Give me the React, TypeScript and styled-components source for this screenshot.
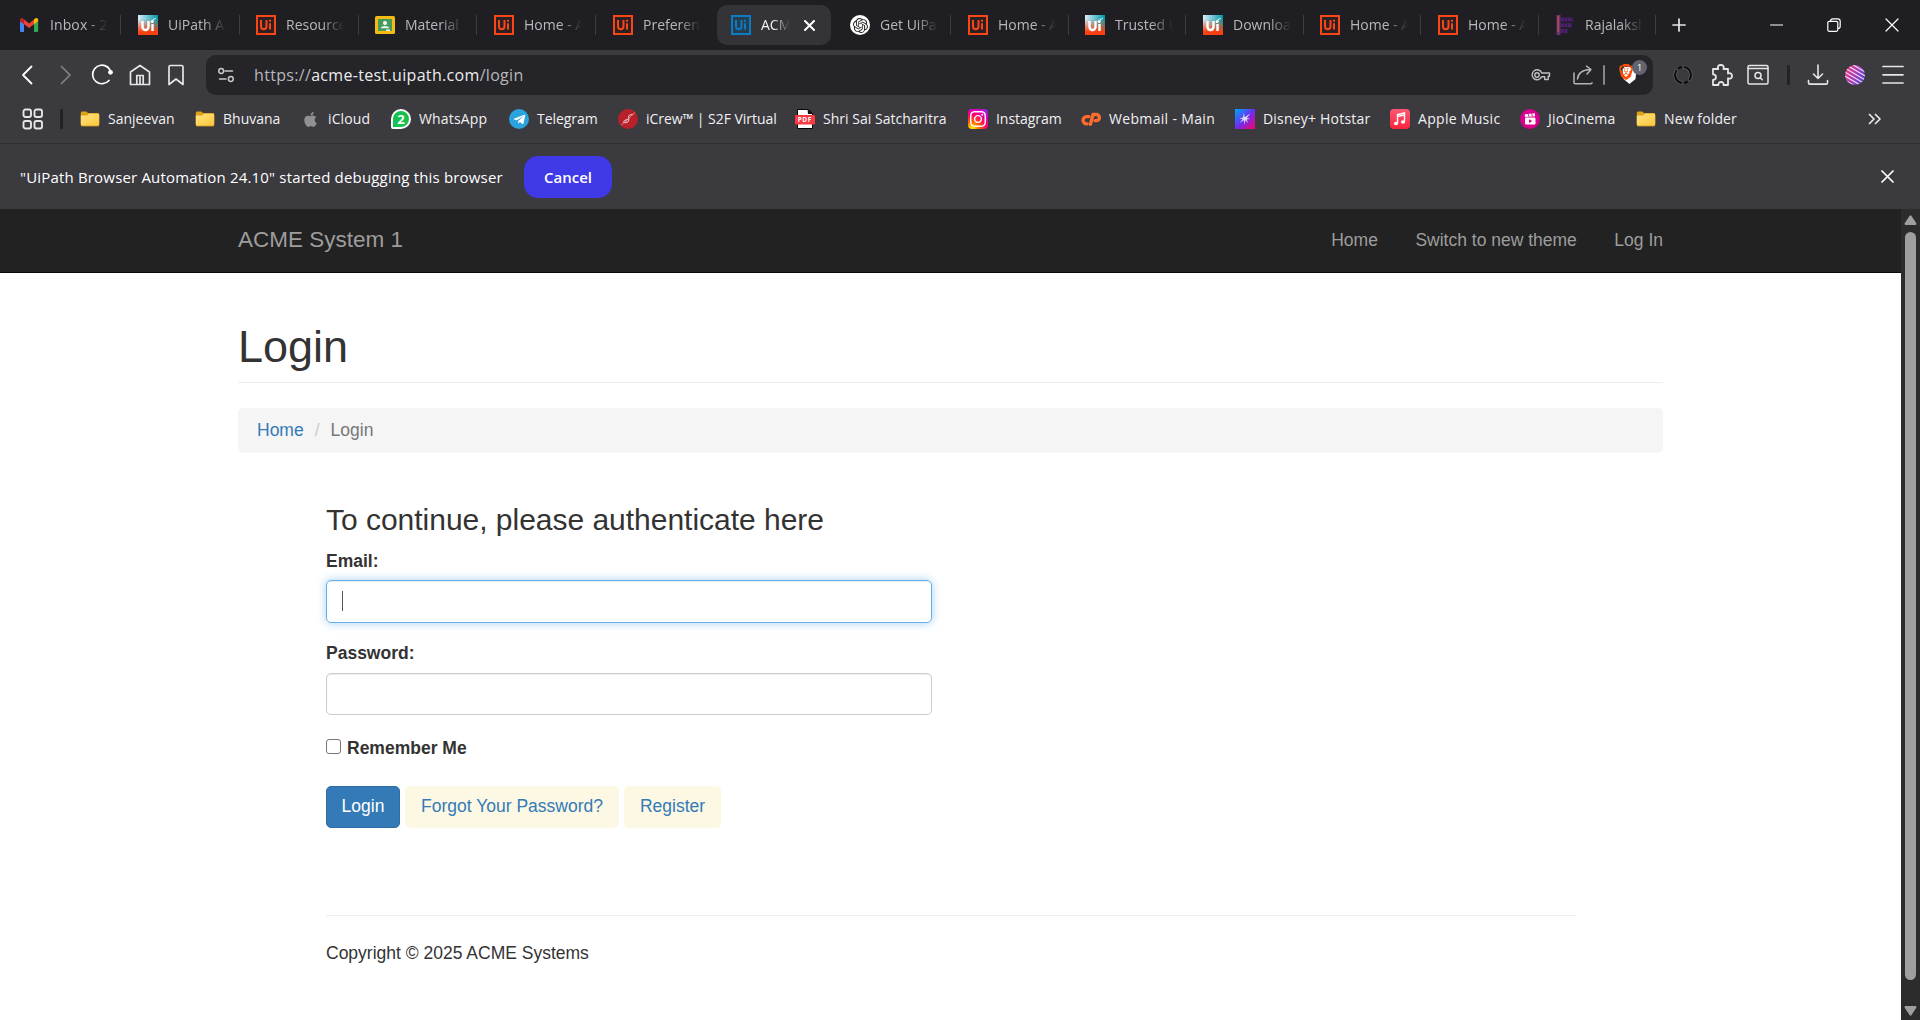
import React from "react";
import styled, { createGlobalStyle, css } from "styled-components";
import { FaApple, FaTelegramPlane } from "react-icons/fa";
import { SiBrave, SiInstagram, SiOpenai } from "react-icons/si";

const uiFont = `"Segoe UI", "Open Sans", "Noto Sans", sans-serif`;
const pageFont = `"Liberation Sans", Arial, sans-serif`;

const GlobalStyle = createGlobalStyle`
  * { box-sizing: border-box; }
  body { margin: 0; overflow: hidden; background: #fff; }
  h1, h3, p { margin: 0; font-weight: 500; }
  svg { display: block; flex: none; }
`;

/* ---------- window layout ---------- */

const Window = styled.div`
  display: flex;
  flex-direction: column;
  width: 1920px;
  height: 1020px;
  font-family: ${uiFont};
  overflow: hidden;
`;

const TabStrip = styled.div`
  display: flex;
  align-items: center;
  height: 50px;
  flex: none;
  padding-left: 3px;
  background: #1f1e23;
`;

const TabSlot = styled.div<{ $width: number; $line?: boolean }>`
  display: flex;
  align-items: center;
  width: ${(p) => p.$width}px;
  height: 20px;
  flex: none;
  border-right: 1px solid ${(p) => (p.$line ? "#3d3c41" : "transparent")};
`;

const TabBody = styled.div<{ $pad: number; $active?: boolean }>`
  display: flex;
  align-items: center;
  flex: none;
  height: 40px;
  padding-left: ${(p) => p.$pad}px;
  ${(p) =>
    p.$active &&
    css`
      width: 114px;
      margin-left: 3px;
      padding-left: 14px;
      border-radius: 10px;
      background: #343338;
    `}
`;

const TabTitle = styled.span<{ $active?: boolean; $spacing?: number }>`
  width: ${(p) => (p.$active ? 29 : 58)}px;
  margin-left: 10px;
  overflow: hidden;
  white-space: nowrap;
  font-size: 14px;
  line-height: 20px;
  letter-spacing: ${(p) => p.$spacing ?? 0}px;
  color: ${(p) => (p.$active ? "#f4f4f5" : "#b9b8bc")};
  mask-image: linear-gradient(to right, #000 ${(p) => (p.$active ? 40 : 62)}%, transparent 100%);
`;

const TabClose = styled.span`
  margin-left: 14px;
`;

const WindowButtons = styled.div`
  display: flex;
  align-items: center;
  margin-left: auto;
  padding-right: 21px;
  gap: 44px;
`;

const NewTab = styled.span`
  margin-left: 16px;
`;

const Toolbar = styled.div`
  display: flex;
  align-items: center;
  height: 50px;
  flex: none;
  padding: 0 16px 0 17px;
  background: #3b3a3f;
`;

const NavButtons = styled.div`
  display: flex;
  align-items: center;
  width: 189px;
  gap: 13px;
`;

const AddressBar = styled.div`
  display: flex;
  align-items: center;
  width: 1447px;
  height: 40px;
  padding: 0 4px 0 12px;
  border-radius: 10px;
  background: #252429;
`;

const Url = styled.span`
  margin-left: 20px;
  font-size: 16px;
  line-height: 22px;
  letter-spacing: 0.32px;
  color: #b8b7bb;
  b {
    font-weight: 400;
    color: #ececee;
  }
`;

const AddressActions = styled.div`
  display: flex;
  align-items: center;
  margin-left: auto;
`;

const Bar = styled.span<{ $w: number; $color: string; $ml: number; $mr: number }>`
  width: ${(p) => p.$w}px;
  height: 20px;
  flex: none;
  margin: 0 ${(p) => p.$mr}px 0 ${(p) => p.$ml}px;
  border-radius: 1px;
  background: ${(p) => p.$color};
`;

const Shield = styled.span`
  position: relative;
  width: 30px;
  height: 24px;
`;

const ShieldBadge = styled.span`
  position: absolute;
  top: -3px;
  left: 13px;
  width: 15px;
  height: 15px;
  border-radius: 8px;
  background: #62636f;
  color: #fff;
  font-size: 9px;
  line-height: 16px;
  text-align: center;
`;

const ToolbarActions = styled.div`
  display: flex;
  align-items: center;
  margin-left: auto;
`;

const Push = styled.span<{ $ml: number }>`
  margin-left: ${(p) => p.$ml}px;
`;

const Bookmarks = styled.div`
  display: flex;
  align-items: center;
  height: 43px;
  flex: none;
  padding: 0 39px 5px 22px;
  background: #3b3a3f;
`;

const Bookmark = styled.div<{ $width: number; $spacing: number }>`
  display: flex;
  align-items: center;
  gap: 8px;
  width: ${(p) => p.$width}px;
  flex: none;
  font-size: 14px;
  line-height: 20px;
  letter-spacing: ${(p) => p.$spacing}px;
  white-space: nowrap;
  color: #f1f1f2;
`;

const InfoBar = styled.div`
  display: flex;
  align-items: center;
  height: 66px;
  flex: none;
  padding: 0 26px 0 20px;
  border-top: 1px solid #2f2e33;
  background: #3b3a3f;
  color: #fff;
  font-size: 15px;
`;

const InfoText = styled.span`
  width: 504px;
  padding-top: 1px;
  letter-spacing: 0.18px;
  white-space: nowrap;
`;

const CancelButton = styled.button`
  width: 88px;
  height: 42px;
  padding: 1px 0 0;
  border: 0;
  border-radius: 14px;
  background: #3f39e8;
  color: #fff;
  font: 600 15px ${uiFont};
`;

const InfoClose = styled.span`
  margin-left: auto;
`;

/* ---------- page ---------- */

const Viewport = styled.div`
  display: flex;
  flex: 1;
  min-height: 0;
`;

const Page = styled.div`
  width: 1901px;
  background: #fff;
  color: #333;
  font-family: ${pageFont};
  font-size: 17.5px;
  line-height: 25px;
`;

const PageNav = styled.nav`
  display: flex;
  align-items: center;
  height: 64px;
  padding: 0 238px 1px;
  border-bottom: 1px solid #080808;
  background: #222;
  color: #9d9d9d;
`;

const Brand = styled.span`
  margin-right: auto;
  padding-bottom: 2px;
  font-size: 22.5px;
`;

const NavLinks = styled.div`
  display: flex;
  gap: 37.5px;
`;

const Content = styled.main`
  padding: 49px 238px 0;
`;

const PageTitle = styled.h1`
  height: 61px;
  border-bottom: 1px solid #eee;
  font-size: 45px;
  line-height: 49px;
`;

const Breadcrumb = styled.div`
  display: flex;
  align-items: center;
  height: 45px;
  margin-top: 25px;
  padding: 0 19px;
  border-radius: 5px;
  background: #f5f5f5;
  color: #777;
`;

const Link = styled.a`
  color: #337ab7;
`;

const Slash = styled.span`
  padding: 0 11px;
  color: #ccc;
`;

const Form = styled.form`
  display: flex;
  flex-direction: column;
  width: 606px;
  margin: 50px 0 0 88px;
`;

const FormTitle = styled.h3`
  margin-bottom: 13px;
  font-size: 30px;
  line-height: 33px;
  letter-spacing: -0.02px;
  white-space: nowrap;
`;

const Label = styled.label`
  font-weight: 700;
`;

const Field = styled.div<{ $focused?: boolean }>`
  display: flex;
  align-items: center;
  height: ${(p) => (p.$focused ? 43 : 42)}px;
  margin: ${(p) => (p.$focused ? 6 : 7)}px 0 18px;
  padding: 0 15px;
  border: 1px solid ${(p) => (p.$focused ? "#66afe9" : "#ccc")};
  border-radius: 5px;
  box-shadow: inset 0 1px 1px rgba(0, 0, 0, 0.075)
    ${(p) => (p.$focused ? ", 0 0 10px rgba(102, 175, 233, 0.6)" : "")};
`;

const Caret = styled.span`
  width: 1px;
  height: 20px;
  margin-bottom: 1px;
  background: #555;
`;

const Remember = styled.div`
  display: flex;
  align-items: center;
  gap: 6px;
  height: 25px;
  margin-top: 3px;
`;

const CheckBox = styled.span`
  width: 15px;
  height: 15px;
  margin-bottom: 4px;
  border: 1px solid #767676;
  border-radius: 3px;
`;

const Buttons = styled.div`
  display: flex;
  gap: 5px;
  margin-top: 25px;
`;

const Button = styled.a<{ $primary?: boolean; $width: number }>`
  display: flex;
  align-items: center;
  justify-content: center;
  width: ${(p) => p.$width}px;
  height: 42px;
  padding-bottom: 2px;
  border: 1px solid ${(p) => (p.$primary ? "#2e6da4" : "transparent")};
  border-radius: 5px;
  background: ${(p) => (p.$primary ? "#337ab7" : "#fcf8e3")};
  color: ${(p) => (p.$primary ? "#fff" : "#337ab7")};
  white-space: nowrap;
`;

const Footer = styled.footer`
  width: 1250px;
  margin: 87px 0 0 88px;
  padding-top: 25px;
  border-top: 1px solid #eee;
`;

const ScrollTrack = styled.div`
  display: flex;
  flex-direction: column;
  align-items: center;
  width: 19px;
  padding: 6px 1px 4px 0;
  background: #2c2c2c;
`;

const ScrollThumb = styled.div`
  width: 11px;
  height: 748px;
  margin: 7px 0 auto;
  border-radius: 6px;
  background: #9f9f9f;
`;

/* ---------- icons ---------- */

type StrokeProps = { w: number; h?: number; color?: string; sw?: number; d: string; children?: React.ReactNode };
const Stroke = ({ w, h = w, color = "#e6e6e8", sw = 1.6, d, children }: StrokeProps) => (
  <svg width={w} height={h} viewBox={`0 0 ${w} ${h}`} fill="none" stroke={color} strokeWidth={sw} strokeLinecap="round" strokeLinejoin="round">
    <path d={d} />
    {children}
  </svg>
);

const Gmail = () => (
  <svg width="20" height="20" viewBox="0 0 20 20">
    <path d="M0 6v9.7c0 .8.5 1.3 1.3 1.3H4V8.5z" fill="#4285f4" />
    <path d="M14 8.5V17h2.9c.7 0 1.3-.6 1.3-1.3V6z" fill="#34a853" />
    <path d="M14 4.6v4.7l4.2-3.1V4.9c0-1.8-1.8-2.5-3-1.5z" fill="#fbbc04" />
    <path d="M4 9.3V4.6l5.1 3.8L14 4.6v4.7l-4.9 3.8z" fill="#ea4335" />
    <path d="M0 4.9v1.3l4 3.1V4.6L3 3.5C1.8 2.500 0 3.200 0 4.900z" fill="#c5221f" />
  </svg>
);

const UiStrokes = ({ color, sw = 2 }: { color: string; sw?: number }) => (
  <g fill="none" stroke={color} strokeWidth={sw}>
    <path d="M5 5v6.300a2.700 2.900 0 0 0 5.500 0V5" />
    <path d="M14 8.300v6.200" />
    <path d="M14 4.800v2" />
  </g>
);

const UiSquare = ({ color, inner }: { color: string; inner: string }) => (
  <svg width="20" height="20" viewBox="0 0 20 20">
    <rect x="1" y="1" width="18" height="18" fill={inner} stroke={color} strokeWidth="2" />
    <UiStrokes color={color} />
  </svg>
);

const UiGradient = ({ id }: { id: string }) => (
  <svg width="20" height="20" viewBox="0 0 20 20">
    <defs>
      <linearGradient id={id} x1="0" y1="0" x2="1" y2="0">
        <stop offset="0" stopColor="#d8eefc" />
        <stop offset="1" stopColor="#0097a8" />
      </linearGradient>
      <linearGradient id={`${id}b`} x1="0" y1="0" x2="0" y2="1">
        <stop offset="0.2" stopColor="#fa4616" stopOpacity="0" />
        <stop offset="0.85" stopColor="#fa4010" />
      </linearGradient>
    </defs>
    <rect width="20" height="20" fill={`url(#${id})`} />
    <rect width="20" height="20" fill={`url(#${id}b)`} />
    <g fill="none" stroke="#fff" strokeWidth="2.400">
      <path d="M4.500 6v6a3 3 0 0 0 6 0V6" />
      <path d="M14.500 9v7" />
    </g>
    <circle cx="14.200" cy="6.400" r="1.500" fill="#fff" />
    <path d="M15 5l2.500-1.800" stroke="#fff" strokeWidth="1.200" strokeDasharray="1.200 .7" />
  </svg>
);

const Classroom = () => (
  <svg width="20" height="20" viewBox="0 0 20 20">
    <rect y="1" width="20" height="18" rx="1.500" fill="#f5ba15" />
    <rect x="3" y="4" width="14" height="12" fill="#469b5b" />
    <circle cx="10" cy="8" r="2" fill="#fff" />
    <path d="M5.800 13.200c0-2.900 8.400-2.900 8.400 0z" fill="#e8f3ea" />
    <rect x="11" y="14.500" width="4" height="1.500" fill="#eee" />
  </svg>
);

const Disc = styled.span<{ $bg: string; $fg: string; $radius?: number }>`
  display: flex;
  align-items: center;
  justify-content: center;
  width: 20px;
  height: 20px;
  flex: none;
  border-radius: ${(p) => p.$radius ?? 10}px;
  background: ${(p) => p.$bg};
  color: ${(p) => p.$fg};
`;

const Rajalakshmi = () => (
  <svg width="20" height="20" viewBox="0 0 20 20">
    <rect x="1.500" width="4" height="20" fill="#713071" />
    <rect x="2.500" y="1" width="1.500" height="16" fill="#a8524d" />
    <g stroke="#562080" strokeWidth="4" strokeDasharray="3 .5">
      <path d="M6 4.500h12M6 10.300h11M6 16h7" opacity=".85" />
    </g>
  </svg>
);

const Folder = () => (
  <svg width="20" height="20" viewBox="0 0 20 20">
    <defs>
      <linearGradient id="folder" x1="0" y1="0" x2="1" y2="1">
        <stop offset="0" stopColor="#ffe382" />
        <stop offset="1" stopColor="#fbc63a" />
      </linearGradient>
    </defs>
    <path d="M.8 4c0-.9.600-1.500 1.500-1.500h4L8 4h9.700c.9 0 1.500.6 1.500 1.500V15H.8z" fill="#dda219" />
    <path d="M.8 6.500h6.400L9 4.800h8.700c.9 0 1.500.6 1.500 1.500v9.200c0 .9-.6 1.500-1.500 1.500H2.300C1.400 17 .8 16.400.8 15.500z" fill="url(#folder)" />
    <path d="M1.200 17h17.600" stroke="#d49a1c" strokeWidth=".8" />
  </svg>
);

const WhatsAppBubble = styled.span`
  display: flex;
  align-items: center;
  justify-content: center;
  width: 20px;
  height: 20px;
  flex: none;
  border: 2px solid #fff;
  border-radius: 10px 10px 10px 2px;
  background: #16c150;
  color: #fff;
  font: 700 13px/16px ${uiFont};
  letter-spacing: 0;
`;

const ICrew = () => (
  <svg width="20" height="20" viewBox="0 0 20 20" fill="none" stroke="#eab0b3" strokeLinecap="round">
    <circle cx="10" cy="10" r="10" fill="#b8202a" stroke="none" />
    <path d="M14.500 5.500c-2.500-.3-4.500 1.500-4 3s1.300 2.500-.5 4-4 1.500-4.300.4 1.500-1.700 4.300-2.700" strokeWidth="1.100" />
    <path d="M3.500 16L17 3.500" strokeWidth=".7" />
  </svg>
);

const CPanel = () => (
  <svg width="20" height="20" viewBox="0 0 20 20" fill="none" stroke="#ff6c2c" strokeWidth="3.300" strokeLinecap="round" strokeLinejoin="round">
    <path d="M8 7.600H5.600a3.600 3.600 0 0 0 0 7.200h.6" />
    <path d="M9.500 15.200l2.500-9.700h3.300a2.900 2.900 0 0 1 0 6.200h-1.300" />
  </svg>
);

const PdfText = styled.text`
  font: 700 6.500px ${uiFont};
  letter-spacing: 0.6px;
`;

const Pdf = () => (
  <svg width="20" height="20" viewBox="0 0 20 20">
    <path d="M2.500.5h11l4 4v15h-15z" fill="#fff" stroke="#050505" />
    <path d="M12.500 0l5.500 5h-5z" fill="#111" />
    <rect y="6" width="20" height="9.500" rx="1" fill="#f93a42" />
    <PdfText x="2.700" y="13.200" fill="#fff">PDF</PdfText>
  </svg>
);

const Star = () => (
  <svg width="20" height="20" viewBox="0 0 20 20">
    <defs>
      <linearGradient id="star" x1="0" y1="0" x2="1" y2="1">
        <stop offset=".05" stopColor="#00a0fa" />
        <stop offset=".5" stopColor="#6b2df4" />
        <stop offset="1" stopColor="#fc0068" />
      </linearGradient>
    </defs>
    <rect width="20" height="20" fill="url(#star)" />
    <path d="M8.800 4l1 4.200L15.500 4.200l-3.700 4.800 3.500.7-3.700.7 1.500 3.500-2.900-2.700L9.200 16l-.4-4.900-4 2.900 2.800-4L4 9.300l4-.7z" fill="#dcd9f4" />
  </svg>
);

const Music = () => (
  <svg width="20" height="20" viewBox="0 0 20 20">
    <defs>
      <linearGradient id="music" x1="0" y1="0" x2="0" y2="1">
        <stop offset="0" stopColor="#fa5a72" />
        <stop offset="1" stopColor="#fa233c" />
      </linearGradient>
    </defs>
    <rect width="20" height="20" rx="4" fill="url(#music)" />
    <path d="M7.500 14V5.600l7-1.600v8.500M7.500 7.500l7-1.600" fill="none" stroke="#fff" strokeWidth="1.400" />
    <ellipse cx="6" cy="14.500" rx="2.100" ry="1.700" fill="#fff" />
    <ellipse cx="13" cy="13" rx="2.100" ry="1.700" fill="#fff" />
  </svg>
);

const Jio = () => (
  <svg width="20" height="20" viewBox="0 0 20 20">
    <circle cx="10" cy="10" r="10" fill="#d9008d" />
    <rect x="5" y="8.500" width="10.500" height="7" rx="1.200" fill="#fff" />
    <path d="M4.800 5.300l10-1 .2 2.900-10 .7z" fill="#fff" />
    <path d="M8 4.700l1 3M11.500 4.300l1 3" stroke="#d9008d" strokeWidth=".9" />
    <path d="M9 10.200l3.200 1.900L9 14z" fill="#d9008d" />
  </svg>
);

const Brave = () => (
  <svg width="21" height="24" viewBox="0 0 21 24">
    <path d="M5.500 4h9l3 2-1 10-6 5-6-5-1-10z" fill="#fff" />
    <SiBrave x="-1" y="1" width="23" height="23" color="#fb4d08" />
  </svg>
);

const Avatar = () => (
  <svg width="20" height="20" viewBox="0 0 20 20">
    <defs>
      <linearGradient id="avatar" x1="0" y1=".3" x2="1" y2=".8">
        <stop offset="0" stopColor="#ec3a76" />
        <stop offset=".5" stopColor="#9f3fbd" />
        <stop offset="1" stopColor="#4c43d8" />
      </linearGradient>
      <clipPath id="round"><circle cx="10" cy="10" r="10" /></clipPath>
    </defs>
    <g clipPath="url(#round)">
      <rect width="20" height="20" fill="url(#avatar)" />
      <path d="M-2-6l24 14M-2-2l24 14M-2 2l24 14M-2 6l24 14M-2 10l24 14M-2 14l24 14" stroke="#f3dff3" strokeWidth="1.200" />
    </g>
  </svg>
);

const Cross = ({ size, sw = 1.5 }: { size: number; sw?: number }) => (
  <Stroke w={size} sw={sw} color="#fff" d={`M1 1L${size - 1} ${size - 1}M${size - 1} 1L1 ${size - 1}`} />
);

/* ---------- data ---------- */

const orange = <UiSquare color="#fa4616" inner="#2c2023" />;

const tabs = [
  { title: "Inbox - 2,", icon: <Gmail />, width: 118, pad: 17, line: true, spacing: 0.1 },
  { title: "UiPath Ac", icon: <UiGradient id="g1" />, width: 119, pad: 17, line: true },
  { title: "Resource", icon: orange, width: 119, pad: 16, line: true },
  { title: "Material", icon: <Classroom />, width: 118, pad: 16, line: true },
  { title: "Home - A", icon: orange, width: 119, pad: 17, line: true },
  { title: "Preferenc", icon: orange, width: 118, pad: 17 },
  { title: "ACME", icon: <UiSquare color="#0a7cc4" inner="#283d4d" />, width: 119, pad: 17, active: true },
  { title: "Get UiPat", icon: <Disc $bg="#fff" $fg="#222"><SiOpenai size={15} /></Disc>, width: 118, pad: 17, line: true },
  { title: "Home - A", icon: orange, width: 118, pad: 17, line: true },
  { title: "Trusted U", icon: <UiGradient id="g2" />, width: 117, pad: 16, line: true },
  { title: "Download", icon: <UiGradient id="g3" />, width: 118, pad: 17, line: true },
  { title: "Home - A", icon: orange, width: 117, pad: 16, line: true },
  { title: "Home - A", icon: orange, width: 118, pad: 17, line: true },
  { title: "Rajalaksh", icon: <Rajalakshmi />, width: 117, pad: 16, line: true },
];

const bookmarks = [
  { title: "Sanjeevan", icon: <Folder />, width: 115, spacing: 0 },
  { title: "Bhuvana", icon: <Folder />, width: 105, spacing: 0 },
  { title: "iCloud", icon: <Disc $bg="transparent" $fg="#919094"><FaApple size={17} /></Disc>, width: 91, spacing: 0.1 },
  { title: "WhatsApp", icon: <WhatsAppBubble>2</WhatsAppBubble>, width: 118, spacing: 0.15 },
  { title: "Telegram", icon: <Disc $bg="#2ba4de" $fg="#fff"><FaTelegramPlane size={13} /></Disc>, width: 109, spacing: -0.05 },
  { title: "iCrew™ | S2F Virtual", icon: <ICrew />, width: 177, spacing: -0.04 },
  { title: "Shri Sai Satcharitra", icon: <Pdf />, width: 173, spacing: 0.02 },
  {
    title: "Instagram",
    icon: (
      <Disc $bg="radial-gradient(circle at 20% 100%, #ffd600 8%, #ff6a00 28%, #ff0169 55%, #d300c5 78%, #7638fa 100%)" $fg="#fff" $radius={4}>
        <SiInstagram size={16} />
      </Disc>
    ),
    width: 113,
    spacing: -0.05,
  },
  { title: "Webmail - Main", icon: <CPanel />, width: 154, spacing: 0.33 },
  { title: "Disney+ Hotstar", icon: <Star />, width: 155, spacing: 0.2 },
  { title: "Apple Music", icon: <Music />, width: 130, spacing: 0.3 },
  { title: "JioCinema", icon: <Jio />, width: 116, spacing: 0.25 },
  { title: "New folder", icon: <Folder />, width: 110, spacing: 0.12 },
];

/* ---------- app ---------- */

export default function App() {
  return (
    <Window>
      <GlobalStyle />
      <TabStrip>
        {tabs.map((t, i) => (
          <TabSlot key={i} $width={t.width} $line={t.line}>
            <TabBody $pad={t.pad} $active={t.active}>
              {t.icon}
              <TabTitle $active={t.active} $spacing={t.spacing}>{t.title}</TabTitle>
              {t.active && <TabClose><Cross size={11} sw={2} /></TabClose>}
            </TabBody>
          </TabSlot>
        ))}
        <NewTab><Stroke w={14} sw={1.700} d="M7 1v12M1 7h12" /></NewTab>
        <WindowButtons>
          <Stroke w={13} sw={1.200} color="#fff" d="M.6 6h12" />
          <Stroke w={14} sw={1.200} color="#fff" d="M3.500 3.500V3c0-1 1-2.200 2.200-2.200h5c1.500 0 2.500 1 2.500 2.500v5c0 1.200-1 2.200-2.200 2.200">
            <rect x=".8" y="3.300" width="10" height="10" rx="1.500" />
          </Stroke>
          <Cross size={14} sw={1.200} />
        </WindowButtons>
      </TabStrip>

      <Toolbar>
        <NavButtons>
          <Stroke w={20} sw={1.800} color="#fff" d="M14.500 1.500L6 10l8.500 8.500" />
          <Push $ml={4}><Stroke w={20} color="#858489" d="M7.500 1.500L16 10l-8.500 8.500" /></Push>
          <Push $ml={3}>
            <Stroke w={24} color="#fff" sw={1.700} d="M17.500 4A9.300 9.300 0 1 0 19 17.500">
              <circle cx="20.500" cy="9.300" r="2.400" fill="#fff" stroke="none" />
              <path d="M17.500 4c1.600 1.200 2.700 3 3 5.300" />
            </Stroke>
          </Push>
          <Push $ml={2}><Stroke w={22} sw={1.700} d="M1.500 20.500V8L11 1.500 20.500 8v12.500zM7.800 20V11.500h6.400V20M11 13v7" /></Push>
          <Push $ml={3}><Stroke w={18} h={22} sw={1.700} d="M2 3c0-.9.600-1.500 1.500-1.500h11c.9 0 1.500.6 1.500 1.500v17.500l-7-5.500-7 5.500z" /></Push>
        </NavButtons>
        <AddressBar>
          <Stroke w={16} sw={1.500} color="#c9c8cc" d="M7 4h7.500M1.500 12H8">
            <circle cx="3.200" cy="4" r="2.400" />
            <circle cx="12.800" cy="12" r="2.400" />
          </Stroke>
          <Url>https://<b>acme-test.uipath.com</b>/login</Url>
          <AddressActions>
            <Stroke w={20} sw={1.400} color="#c0bfc3" d="M10.800 8h7.700v3.200h-1.300v3.300h-3.500v-2.700h-3A5 5 0 1 1 10.800 8z">
              <circle cx="6" cy="10" r="2.200" />
            </Stroke>
            <Push $ml={22}>
              <Stroke w={20} sw={1.500} color="#b5b4b8" d="M1 8v9.500c0 .8.500 1.300 1.300 1.300H18c.600 0 1-.4 1-1M4.500 14c.5-5.500 4-9 12.500-9.500M13.500 1.200L18 4.500 14 9" />
            </Push>
            <Bar $w={2} $color="#86858a" $ml={10} $mr={14} />
            <Shield><Brave /><ShieldBadge>1</ShieldBadge></Shield>
          </AddressActions>
        </AddressBar>
        <ToolbarActions>
          <Stroke w={20} sw={3.200} color="#77767b" d="M11.500 2.200a8 8 0 0 1 5 12.300M8.500 17.800a8 8 0 0 1-5-12.300">
            <path d="M11.500 2.200a8 8 0 0 1 5 12.300M8.500 17.800a8 8 0 0 1-5-12.300M8 2.300a8 8 0 0 0-2 .9M12 17.700a8 8 0 0 0 2-.9" stroke="#0c0c0e" strokeWidth="2.200" />
          </Stroke>
          <Push $ml={18}>
            <Stroke w={22} sw={1.800} d="M2 5h5.200C6 2.500 7.500 1 9.800 1s3.800 1.500 2.600 4H17v4.500c2.300-1 4 .2 4 2.400s-1.700 3.500-4 2.400V21h-4.500c.4-2-.8-3-2.500-3s-2.800 1-2.500 3H2v-5c2-.2 3-1.300 3-2.900S4 10.500 2 10.300z" />
          </Push>
          <Push $ml={14}>
            <Stroke w={22} sw={1.500} d="M1 4.500h20">
              <rect x="1" y="1.500" width="20" height="18.500" rx="1.500" />
              <circle cx="11" cy="11.500" r="3" />
              <path d="M13.200 13.700l2 2" />
            </Stroke>
          </Push>
          <Bar $w={3} $color="#232227" $ml={18} $mr={17} />
          <Stroke w={22} sw={1.600} d="M11 1v13.500M6.500 10L11 14.500 15.500 10M1.500 16.500v2.200c0 .9.500 1.400 1.400 1.400h16.200c.9 0 1.400-.5 1.400-1.400v-2.200" />
          <Push $ml={16}><Avatar /></Push>
          <Push $ml={17}><Stroke w={22} sw={1.700} d="M1 2.500h20M1 10.800h20M1 19h20" /></Push>
        </ToolbarActions>
      </Toolbar>

      <Bookmarks>
        <Stroke w={22} sw={1.900} d="">
          <rect x="1.500" y="1.500" width="7.500" height="7.500" rx="2" />
          <rect x="12.500" y="1.500" width="7.500" height="7.500" rx="2" />
          <rect x="1.500" y="13" width="7.500" height="7.500" rx="2" />
          <rect x="12.500" y="13" width="7.500" height="7.500" rx="2" />
        </Stroke>
        <Bar $w={3} $color="#222126" $ml={16} $mr={17} />
        {bookmarks.map((b) => (
          <Bookmark key={b.title} $width={b.width} $spacing={b.spacing}>
            {b.icon}
            <span>{b.title}</span>
          </Bookmark>
        ))}
        <InfoClose><Stroke w={13} h={12} sw={1.700} d="M1.500 1.500L6 6l-4.500 4.500M7.500 1.500L12 6l-4.500 4.500" /></InfoClose>
      </Bookmarks>

      <InfoBar>
        <InfoText>"UiPath Browser Automation 24.10" started debugging this browser</InfoText>
        <CancelButton>Cancel</CancelButton>
        <InfoClose><Cross size={13} sw={1.700} /></InfoClose>
      </InfoBar>

      <Viewport>
        <Page>
          <PageNav>
            <Brand>ACME System 1</Brand>
            <NavLinks>
              <span>Home</span>
              <span>Switch to new theme</span>
              <span>Log In</span>
            </NavLinks>
          </PageNav>
          <Content>
            <PageTitle>Login</PageTitle>
            <Breadcrumb>
              <Link>Home</Link>
              <Slash>/</Slash>
              <span>Login</span>
            </Breadcrumb>
            <Form>
              <FormTitle>To continue, please authenticate here</FormTitle>
              <Label>Email:</Label>
              <Field $focused><Caret /></Field>
              <Label>Password:</Label>
              <Field />
              <Remember>
                <CheckBox />
                <Label>Remember Me</Label>
              </Remember>
              <Buttons>
                <Button $primary $width={74}>Login</Button>
                <Button $width={214}>Forgot Your Password?</Button>
                <Button $width={97}>Register</Button>
              </Buttons>
            </Form>
            <Footer>Copyright © 2025 ACME Systems</Footer>
          </Content>
        </Page>
        <ScrollTrack>
          <svg width="13" height="10" viewBox="0 0 13 10"><path d="M5.500 1a1.200 1.200 0 0 1 2 0L12.500 8.500 12 10H1L.5 8.500z" fill="#9f9f9f" /></svg>
          <ScrollThumb />
          <svg width="13" height="10" viewBox="0 0 13 10"><path d="M5.500 9a1.200 1.200 0 0 0 2 0L12.500 1.500 12 0H1L.5 1.500z" fill="#9f9f9f" /></svg>
        </ScrollTrack>
      </Viewport>
    </Window>
  );
}
